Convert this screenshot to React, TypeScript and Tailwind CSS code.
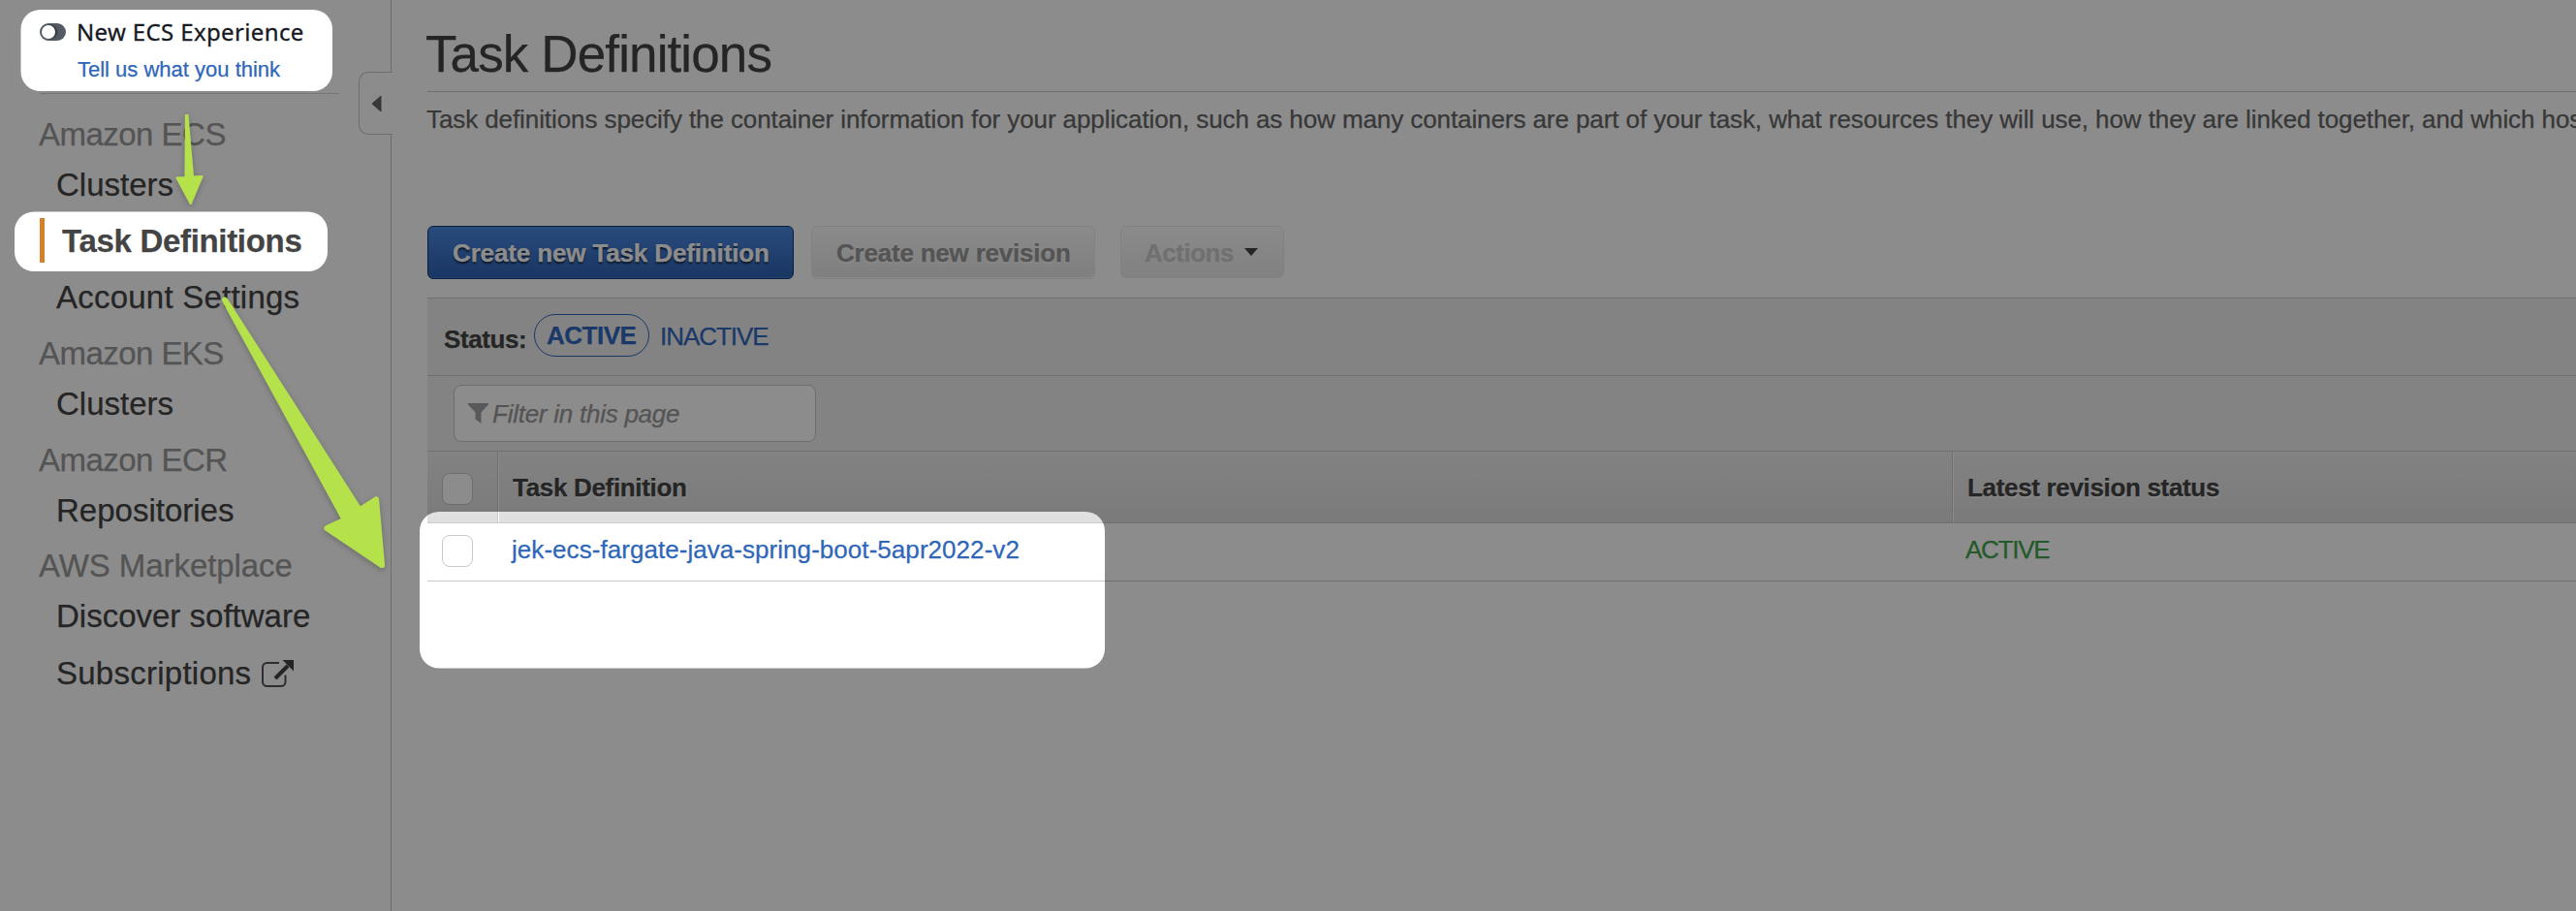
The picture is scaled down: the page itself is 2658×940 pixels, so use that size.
import type { ReactNode } from 'react';

function NavHeading({ className, children }: { className: string; children: ReactNode }) {
  return <div className={`h-[46px] pl-[40px] text-[33px] leading-[45px] text-[#999] ${className}`}>{children}</div>;
}

function NavItem({ className, children }: { className: string; children: ReactNode }) {
  return (
    <a className={`flex h-[58px] items-center pl-[58px] text-[33px] leading-[58px] text-[#444] ${className}`}>
      {children}
    </a>
  );
}

function ExternalIcon() {
  return (
    <svg className="ml-[10px] h-[30px] w-[34px]" viewBox="0 0 34 30" fill="none">
      <path
        d="M19 4H6.500A4.500 4.500 0 0 0 2 8.500V23.500A4.500 4.500 0 0 0 6.500 28H21A4.500 4.500 0 0 0 25.500 23.500V16.500"
        stroke="#555"
        strokeWidth="2"
      />
      <path d="M15 20L28 7" stroke="#444" strokeWidth="4" />
      <path d="M22.500 1H34V12.500Z" fill="#444" />
    </svg>
  );
}

function Sidebar() {
  return (
    <aside className="relative h-full w-[404px] shrink-0 border-r border-[#c8c8c8]">
      <div className="ml-[41px] flex h-[97px] w-[309px] flex-col border-b border-[#d5d5d5] pt-[16px]">
        <div className="flex h-[34px] items-center">
          <span className="flex h-[18px] w-[27px] items-center rounded-full bg-[#545b64] pl-[2px]">
            <span className="size-[14px] rounded-full bg-white shadow-[2px_0_2px_rgba(0,0,0,0.45)]" />
          </span>
          <span className="pl-[11px] font-['Noto_Sans',sans-serif] text-[24px] leading-[34px] tracking-[0.36px] text-[#16191f] [-webkit-text-stroke:0.3px]">
            New ECS Experience
          </span>
        </div>
        <a className="pl-[39px] text-[22px] leading-[43px] text-[#2e66b8]">Tell us what you think</a>
      </div>
      <nav className="pt-[19px]">
        <NavHeading className="tracking-[-0.52px]">Amazon ECS</NavHeading>
        <NavItem className="">Clusters</NavItem>
        <a className="flex h-[58px] items-center pl-[41px]">
          <span className="mt-[-2px] h-[46px] w-[5px] bg-[#d5802b]" />
          <span className="pl-[18px] text-[33px] font-bold tracking-[-0.31px] text-[#444]">Task Definitions</span>
        </a>
        <NavItem className="tracking-[0.23px]">Account Settings</NavItem>
        <NavHeading className="mt-[6px] tracking-[-0.55px]">Amazon EKS</NavHeading>
        <NavItem className="">Clusters</NavItem>
        <NavHeading className="mt-[6px] tracking-[-0.53px]">Amazon ECR</NavHeading>
        <NavItem className="">Repositories</NavItem>
        <NavHeading className="mt-[5px] tracking-[-0.07px]">AWS Marketplace</NavHeading>
        <NavItem className="">Discover software</NavItem>
        <NavItem className="mt-px tracking-[0.25px]">
          Subscriptions
          <ExternalIcon />
        </NavItem>
      </nav>
      <button className="absolute top-[74px] left-[370px] flex h-[65px] w-[35px] items-center rounded-l-[10px] border border-r-0 border-[#c8c8c8] bg-white pl-[12px]">
        <svg className="h-[18px] w-[11px]" viewBox="0 0 11 18">
          <path d="M10 1V17L1 9Z" fill="#666" stroke="#666" strokeLinejoin="round" />
        </svg>
      </button>
    </aside>
  );
}

function Checkbox() {
  return <span className="h-[33px] w-[32px] rounded-[8px] border border-[#c8c8c8] bg-white" />;
}

function Toolbar() {
  return (
    <div className="flex h-[55px]">
      <button className="h-[55px] w-[378px] rounded-[6px] border border-[#12386f] bg-linear-to-b from-[#4a8ae4] to-[#2f62b4] pt-px pl-[25px] text-left text-[26px] font-bold tracking-[-0.14px] text-white shadow-[inset_0_-1px_0_#3d78cf] [text-shadow:0_2px_2px_rgba(0,0,0,0.7)]">
        Create new Task Definition
      </button>
      <button className="ml-[18px] h-[55px] w-[293px] rounded-[6px] border border-[#ececec] bg-linear-to-b from-[#fcfcfc] to-[#e8e8e8] pt-px pl-[25px] text-left text-[26px] font-bold tracking-[-0.21px] text-[#999] shadow-[inset_0_-1px_0_#fcfcfc] [text-shadow:0_2px_2px_rgba(255,255,255,0.8)]">
        Create new revision
      </button>
      <button className="ml-[26px] flex h-[54px] w-[169px] items-center rounded-[6px] border border-[#ececec] bg-linear-to-b from-[#fcfcfc] to-[#ebebeb] pl-[24px] text-[26px] font-bold tracking-[-0.48px] text-[#ccc]">
        <span className="pt-[3px]">Actions</span>
        <svg className="ml-[11px] h-[8px] w-[14px]" viewBox="0 0 14 8">
          <path d="M0 0H14L7 8Z" fill="#444" />
        </svg>
      </button>
    </div>
  );
}

function TaskTable() {
  return (
    <section className="mt-[19px] border-t border-[#cbcbcb]">
      <div className="flex h-[80px] items-start border-b border-[#cbcbcb] bg-[#eee] pl-[17px] text-[26px]">
        <span className="w-[84px] pt-[27px] leading-[30px] font-bold tracking-[-0.41px] text-[#444]">Status:</span>
        <a className="mt-[16px] ml-[9px] h-[44px] w-[119px] rounded-full border border-[#3069c0] pl-[12px] leading-[43px] font-bold tracking-[-0.5px] text-[#3069c0]">
          ACTIVE
        </a>
        <a className="ml-[11px] pt-[24px] leading-[30px] tracking-[-1.05px] text-[#3069c0]">INACTIVE</a>
      </div>
      <div className="flex h-[78px] border-b border-[#cbcbcb] bg-[#eee] pt-[9px] pl-[27px]">
        <div className="flex h-[59px] w-[374px] items-center rounded-[8px] border border-[#c8c8c8] bg-white pl-[14px] text-[26px] tracking-[-0.25px] text-[#999] italic">
          <svg className="mr-[4px] h-[21px] w-[21px]" viewBox="0 0 21 21">
            <path d="M0 0H21V1.500L13.500 9.500V21L7.500 16.500V9.500L0 1.500Z" fill="#a3a3a3" />
          </svg>
          <span className="pt-[2px]">Filter in this page</span>
        </div>
      </div>
      <div className="grid h-[74px] grid-cols-[73px_1501px_1fr] border-b border-[#cbcbcb] bg-linear-to-b from-[#eee] to-[#dfdfdf] text-[26px] font-bold text-[#444] [text-shadow:1px_2px_1px_rgba(255,255,255,0.8)]">
        <div className="flex items-start border-r border-[#cbcbcb] pt-[22px] pl-[15px]">
          <Checkbox />
        </div>
        <div className="border-r border-l border-r-[#cbcbcb] border-l-white pt-[22px] pl-[14px] leading-[30px] tracking-[-0.32px]">
          Task Definition
        </div>
        <div className="border-l border-white pt-[22px] pl-[14px] leading-[30px] tracking-[-0.33px]">
          Latest revision status
        </div>
      </div>
      <div className="grid h-[60px] grid-cols-[73px_1501px_1fr] border-b border-[#cbcbcb] bg-white text-[26px]">
        <div className="flex items-start pt-[12px] pl-[15px]">
          <Checkbox />
        </div>
        <div className="pt-[12px] pl-[14px] leading-[30px] tracking-[0.05px] text-[#2e66b8]">
          jek-ecs-fargate-java-spring-boot-5apr2022-v2
        </div>
        <div className="pt-[12px] pl-[13px] leading-[30px] tracking-[-1.25px] text-[#43a44c]">ACTIVE</div>
      </div>
    </section>
  );
}

function Annotations() {
  return (
    <svg className="pointer-events-none absolute inset-0 h-[940px] w-[2658px]" viewBox="0 0 2658 940">
      <defs>
        <mask id="spotlights">
          <rect width="2658" height="940" fill="#fff" />
          <rect x="21.500" y="10" width="321.500" height="84" rx="20" fill="#000" />
          <rect x="15" y="218.500" width="323" height="61.500" rx="20" fill="#000" />
          <rect x="433" y="528" width="707" height="161.500" rx="20" fill="#000" />
        </mask>
        <filter id="arrow-shadow" x="-30%" y="-30%" width="160%" height="160%">
          <feDropShadow dx="0" dy="2" stdDeviation="3" floodColor="#000" floodOpacity="0.250" />
        </filter>
      </defs>
      <rect width="2658" height="940" fill="#000" fillOpacity="0.450" mask="url(#spotlights)" />
      <g fill="#b5e24c" stroke="#b5e24c" strokeLinejoin="round" filter="url(#arrow-shadow)">
        <path d="M192 119H193.500L199 182.500L208.500 182L196.700 210L182.500 183.500L191.500 183Z" strokeWidth="2" />
        <path d="M232 309.500L371 526.500L388 515.500L394 583L337.500 545L356 536.500Z" strokeWidth="6" />
      </g>
    </svg>
  );
}

export default function App() {
  return (
    <div className="relative flex h-[940px] w-[2658px] overflow-hidden bg-white font-['Liberation_Sans',Arial,sans-serif] [-webkit-text-stroke:0.25px]">
      <Sidebar />
      <main className="min-w-0 flex-1 pl-[37px]">
        <h1 className="h-[95px] border-b border-[#cbcbcb] pt-[26px] text-[53px] leading-[60px] text-[#444]">
          <span className="ml-[-2px] tracking-[-0.88px]">Task Definitions</span>
        </h1>
        <p className="mb-[95px] ml-[-1px] h-[43px] pt-[13px] text-[26px] leading-[30px] tracking-[-0.088px] whitespace-nowrap text-[#666]">
          Task definitions specify the container information for your application, such as how many containers are part of
          your task, what resources they will use, how they are linked together, and which hos
        </p>
        <Toolbar />
        <TaskTable />
      </main>
      <Annotations />
    </div>
  );
}
